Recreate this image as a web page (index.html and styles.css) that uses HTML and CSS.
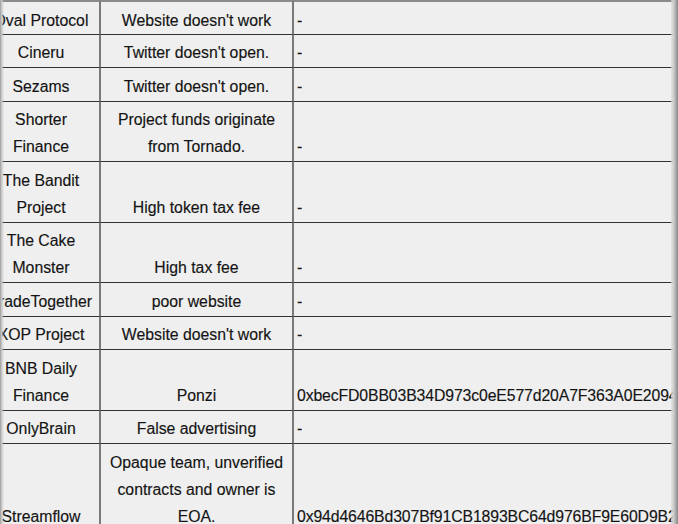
FILE: index.html
```html
<!DOCTYPE html>
<html>
<head>
<meta charset="utf-8">
<link rel="stylesheet" href="styles.css">
</head>
<body>
<div class="frame">
<table class="scam-table">
  <colgroup>
    <col class="c-name">
    <col class="c-reason">
    <col class="c-addr">
  </colgroup>
  <tbody>
    <tr class="first"><td class="name">Oval Protocol</td><td class="reason">Website doesn't work</td><td class="addr">-</td></tr>
    <tr><td class="name">Cineru</td><td class="reason">Twitter doesn't open.</td><td class="addr">-</td></tr>
    <tr><td class="name">Sezams</td><td class="reason">Twitter doesn't open.</td><td class="addr">-</td></tr>
    <tr><td class="name">Shorter Finance</td><td class="reason">Project funds originate from Tornado.</td><td class="addr">-</td></tr>
    <tr><td class="name">The Bandit Project</td><td class="reason">High token tax fee</td><td class="addr">-</td></tr>
    <tr><td class="name">The Cake Monster</td><td class="reason">High tax fee</td><td class="addr">-</td></tr>
    <tr><td class="name">TradeTogether</td><td class="reason">poor website</td><td class="addr">-</td></tr>
    <tr><td class="name">XOP Project</td><td class="reason">Website doesn't work</td><td class="addr">-</td></tr>
    <tr><td class="name">BNB Daily Finance</td><td class="reason">Ponzi</td><td class="addr">0xbecFD0BB03B34D973c0eE577d20A7F363A0E2094</td></tr>
    <tr><td class="name">OnlyBrain</td><td class="reason">False advertising</td><td class="addr">-</td></tr>
    <tr><td class="name">Streamflow</td><td class="reason">Opaque team, unverified contracts and owner is EOA.</td><td class="addr">0x94d4646Bd307Bf91CB1893BC64d976BF9E60D9B2</td></tr>
  </tbody>
</table>
</div>
</body>
</html>
```

FILE: styles.css
```css
html, body {
  margin: 0;
  padding: 0;
  background: #efefef;
  overflow: hidden;
  height: 100%;
}

.frame {
  position: relative;
  width: 678px;
  height: 524px;
  overflow: hidden;
}

.frame::before,
.frame::after {
  content: "";
  position: absolute;
  top: 0;
  bottom: 0;
  z-index: 2;
  pointer-events: none;
}

.frame::before {
  left: 0;
  width: 4px;
  background: linear-gradient(to right, #9a9a9a, #c8c8c8 40%, rgba(239,239,239,0));
}

.frame::after {
  right: 0;
  width: 7px;
  background: linear-gradient(to right, rgba(220,220,220,0.6), #cfcfcf 35%, #a8a8a8 70%, #888 100%);
}

.scam-table {
  margin-left: -20px;
  border-collapse: separate;
  border-spacing: 0;
  table-layout: fixed;
  width: 734px;
  font-family: "Liberation Sans", Arial, sans-serif;
  font-size: 15.8px;
  line-height: 27px;
  color: #141414;
  -webkit-text-stroke: 0.15px #141414;
}

.c-name { width: 121px; }
.c-reason { width: 193px; }
.c-addr { width: 420px; }

.scam-table td {
  vertical-align: bottom;
  padding: 4.5px 4px 1px 4px;
  border-top: 1px solid #333;
  white-space: normal;
}

.scam-table tr.first td {
  border-top: 2px solid #8a8a8a;
  padding-top: 4.5px;
  padding-bottom: 0.25px;
}

.scam-table td.name {
  text-align: center;
  padding-left: 6px;
  padding-right: 3px;
  border-right: 2px solid #7a7a7a;
}

.scam-table td.reason {
  text-align: center;
  border-right: 2px solid #7a7a7a;
}

.scam-table td.addr {
  text-align: left;
  padding-left: 3px;
  white-space: nowrap;
  overflow: hidden;
  letter-spacing: -0.12px;
}
```
